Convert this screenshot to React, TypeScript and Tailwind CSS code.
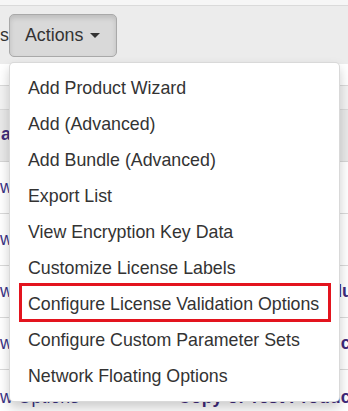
import React from "react";

const menuItems = [
  "Add Product Wizard",
  "Add (Advanced)",
  "Add Bundle (Advanced)",
  "Export List",
  "View Encryption Key Data",
  "Customize License Labels",
  "Configure License Validation Options",
  "Configure Custom Parameter Sets",
  "Network Floating Options",
];

const rows = [
  { left: "w", right: "" },
  { left: "w", right: "" },
  { left: "w", right: "Copy of Basic Product" },
  { left: "w", right: "Copy of Test Product" },
  { left: "w Options", right: "Copy of Test Product" },
];

const App: React.FC = () => {
  return (
    <div className="relative w-[348px] h-[411px] overflow-hidden bg-white font-['Liberation_Sans',Arial,sans-serif] text-[17.8px] text-[#333]">
      {/* top strip */}
      <div className="h-[6px] bg-[#f6f6f6] border-b border-[#dadada]" />

      {/* toolbar */}
      <div className="h-[58px] bg-[#ececec] flex items-start pt-[8px]">
        <span className="w-[9px] leading-[43px] overflow-hidden whitespace-nowrap">s</span>
        <div className="relative z-10">
          <button className="h-[43px] flex items-center pl-[15px] pr-[16px] rounded-[5px] border border-[#a9a9a9] bg-[#d9d9d9] shadow-[inset_0_3px_5px_rgba(0,0,0,0.13)] text-[#333]">
            Actions
            <span className="ml-[7px] w-0 h-0 border-x-[5px] border-x-transparent border-t-[5px] border-t-[#333]" />
          </button>

          {/* dropdown */}
          <div className="absolute top-[48px] left-0 w-[331px] py-[7px] bg-white border border-black/15 rounded-[5px] shadow-[0_6px_12px_rgba(0,0,0,0.2)]">
            {menuItems.map((item, i) => (
              <div key={item} className="relative h-[36px] flex items-center pl-[18px] whitespace-nowrap">
                {item}
                {i === 6 && (
                  <div className="absolute left-[9px] right-[8px] top-[-3px] bottom-0 border-[3px] border-[#e3141e]" />
                )}
              </div>
            ))}
          </div>
        </div>
      </div>

      {/* table behind the menu */}
      <div className="flex flex-col">
        <div className="h-[22px] border-b border-[#dadada]" />
        <div className="h-[24px] bg-[#f3f3f3] border-b border-[#dadada]" />
        <div className="h-[52px] bg-[#e9e9e9] border-b border-[#d6d6d6] pt-[11px] pl-[1px] font-bold text-[#3f2b7c]">
          a
        </div>
        {rows.map((r, i) => (
          <div
            key={i}
            className={`h-[52px] border-b border-[#dadada] flex items-start ${i === 4 ? "pt-[14px]" : "pt-[12px]"}`}
          >
            <div className="w-[178px] shrink-0 whitespace-nowrap overflow-hidden text-[#3b3386]">{r.left}</div>
            <div className="w-[170px] whitespace-nowrap overflow-hidden font-bold text-[#3f2b7c]">{r.right}</div>
          </div>
        ))}
      </div>
    </div>
  );
};

export default App;
